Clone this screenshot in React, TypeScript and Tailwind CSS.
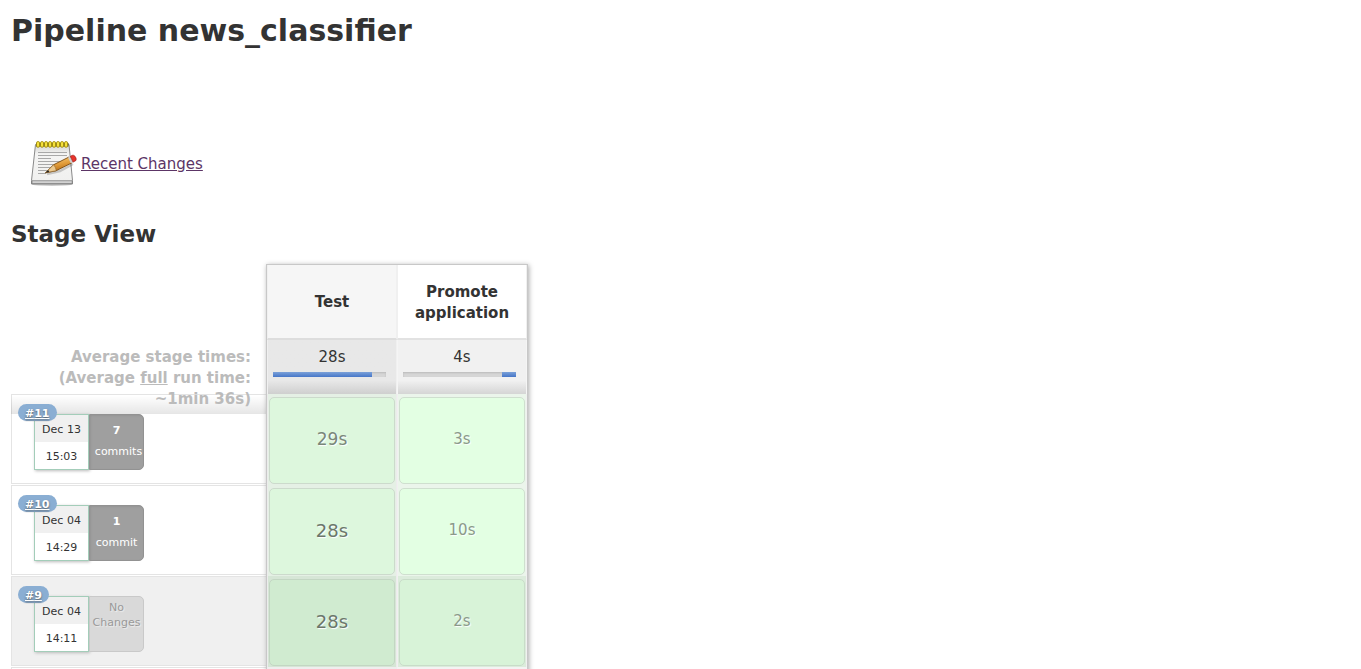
import React from "react";

type Commits = { count?: number; label: string };
type Run = { id: number; date: string; time: string; commits: Commits; test: string; promote: string; big?: boolean; shaded?: boolean };

const runs: Run[] = [
  { id: 11, date: "Dec 13", time: "15:03", commits: { count: 7, label: "commits" }, test: "29s", promote: "3s" },
  { id: 10, date: "Dec 04", time: "14:29", commits: { count: 1, label: "commit" }, test: "28s", promote: "10s", big: true },
  { id: 9, date: "Dec 04", time: "14:11", commits: { label: "No Changes" }, test: "28s", promote: "2s", big: true, shaded: true },
];

function NotepadIcon() {
  return (
    <svg viewBox="0 0 48 48" className="h-12 w-12" aria-hidden="true">
      <defs>
        <linearGradient id="paper" x1="0" y1="0" x2="0" y2="1">
          <stop offset="0" stopColor="#d4d4d2" />
          <stop offset="0.25" stopColor="#f4f4f3" />
          <stop offset="1" stopColor="#f0f0ef" />
        </linearGradient>
        <linearGradient id="wood" x1="0.3" y1="0" x2="0.6" y2="1">
          <stop offset="0" stopColor="#f8cc78" />
          <stop offset="0.5" stopColor="#e09a38" />
          <stop offset="1" stopColor="#a8620f" />
        </linearGradient>
      </defs>
      <ellipse cx="22" cy="44.500" rx="20" ry="1.400" fill="#000" opacity="0.2" />
      <path d="M5.500 4.500h33.500l3.500 36v3.500h-41v-3.500z" fill="url(#paper)" stroke="#8a8a8a" strokeWidth="1" strokeLinejoin="round" />
      <path d="M2 40.700h40.200v2.800H2z" fill="#d2d2d2" stroke="#777" strokeWidth="0.7" />
      <path d="M8 12.500h29M8 15.500h29M8 18.500h13M8 21.500h29M8 24.500h29M8 27.500h25M8 30.500h12M8 33.500h8" stroke="#a8a8a8" strokeWidth="1" />
      <path d="M6 3h32.500v3.500H6z" fill="#555032" />
      {[6, 10, 14, 18, 22, 26, 30, 34].map((x) => (
        <rect key={x} x={x + 0.5} y="1.500" width="3.100" height="5.800" rx="1.500" fill="#f6e23c" stroke="#9a8508" strokeWidth="0.8" />
      ))}
      <path d="M17 34l13-3 13-7" stroke="#000" strokeWidth="2.500" opacity="0.18" fill="none" />
      <path d="M15.500 32.800l8-8L39 17l3 5.800-16 8z" fill="url(#wood)" stroke="#7a4a10" strokeWidth="0.9" strokeLinejoin="round" />
      <path d="M15.500 32.800l8-8c1.500 1.500 2.500 3.500 2.700 5.900z" fill="#edc98e" stroke="#8a642f" strokeWidth="0.6" />
      <path d="M15.500 32.800l2.700-2.700 1.100 2z" fill="#222" />
      <path d="M38 17.500l2.800 5.800 2.200-1.100-2.700-5.800z" fill="#d0d0d0" />
      <path d="M40.300 16.300l2.200-1c2.200-.7 4.700 3.600 3.200 5.400l-2.700 1.400z" fill="#e8332b" stroke="#9e1c16" strokeWidth="0.7" />
    </svg>
  );
}

function StageAverage({ time, before, width }: { time: string; before: string; width: string }) {
  return (
    <div className="flex h-[54px] flex-col px-[5px] pt-[7px]">
      <span className="text-center leading-[21px]">{time}</span>
      <div className="mt-1 flex h-[5px] w-[113px] bg-[#d6d6d6] shadow-[inset_0_1px_2px_#bbb]">
        <span className={before} />
        <span className={`${width} bg-linear-to-b from-[#7ba1d8] to-[#4676c8]`} />
      </div>
    </div>
  );
}

function StageCell({ value, className, text }: { value: string; className: string; text: string }) {
  return (
    <div className={`mx-px mt-[3px] flex h-[87px] items-center justify-center rounded-[5px] border pb-[3px] ${className}`}>
      <span className={`leading-[21px] [text-shadow:1px_1px_1px_#fff] ${text}`}>{value}</span>
    </div>
  );
}

function RunCard({ run }: { run: Run }) {
  const { count, label } = run.commits;
  return (
    <div className="relative flex pt-[19px] pl-[22px] text-[11px]">
      <a href={`#run-${run.id}`} className="absolute top-[9px] left-1.5 z-10 h-[17px] rounded-full bg-[#8aaed3] px-[7px] leading-[19px] font-bold text-white underline [text-shadow:0_1px_2px_#555]">
        #{run.id}
      </a>
      <div className="h-14 w-[55px] border border-[#a3cdb9] bg-white text-center shadow-[1px_1px_3px_#bbb]">
        <div className="h-[27px] bg-[#f0f0f0] leading-[30px]">{run.date}</div>
        <div className="h-[27px] leading-[30px]">{run.time}</div>
      </div>
      {count ? (
        <div className="h-14 w-[55px] rounded-r-[5px] border border-[#929292] bg-[#9f9f9f] pt-[5px] pl-1 text-center leading-[21px] text-white shadow-[inset_1px_1px_2px_#949494]">
          <div className="pr-1 font-bold">{count}</div>
          <div className={label === "commit" ? "pr-1" : ""}>{label}</div>
        </div>
      ) : (
        <div className="h-14 w-[55px] rounded-r-[5px] border border-[#c9c9c9] bg-[#d9d9d9] pt-[3px] text-center leading-[15px] text-[#999] [text-shadow:1px_1px_1px_#eee]">
          {label}
        </div>
      )}
    </div>
  );
}

export default function App() {
  return (
    <main className="h-screen overflow-hidden bg-white px-[11px] pt-2 font-['DejaVu_Sans',sans-serif] text-[15px] text-[#333]">
      <h1 className="text-[30px] leading-[45px] font-bold">Pipeline news_classifier</h1>
      <div className="mt-[87px] ml-[19px] flex h-12 items-center gap-[3px]">
        <NotepadIcon />
        <a href="#changes" className="text-[#5c3566] underline">Recent Changes</a>
      </div>
      <h2 className="mt-[29px] text-[23px] leading-[34px] font-bold">Stage View</h2>
      <div className="relative mt-[13px] w-fit">
        <table className="table-fixed border-separate border-spacing-0">
          <colgroup>
            <col className="w-[256px]" />
            <col className="w-[130px]" />
            <col className="w-[130px]" />
          </colgroup>
          <thead>
            <tr>
              <td />
              <th className="h-[76px] border-x border-t border-b-2 border-x-[#f0f0f0] border-t-[#ccc] border-b-[#ddd] bg-[#f6f6f6] px-0 pt-0.5 pb-0 leading-[21px]">Test</th>
              <th className="h-[76px] border-x border-t border-b-2 border-x-[#f0f0f0] border-t-[#ccc] border-b-[#e2e2e2] px-0 pt-0.5 pb-0 leading-[21px]">Promote<br />application</th>
            </tr>
            <tr>
              <th className="relative p-0">
                <div className="absolute top-0 left-0 z-10 h-[74px] w-[255px] bg-linear-to-b from-transparent from-75% to-black/10 pt-[7px] pr-[15px] pl-8 text-right leading-[21px] text-[#bbb]">
                  Average stage times:<br />(Average <u>full</u> run time: ~1min 36s)
                </div>
              </th>
              <td className="border-x border-[#f0f0f0] bg-linear-to-b from-[#e8e8e8] from-75% to-[#cfcfcf] p-0">
                <StageAverage time="28s" before="w-0" width="w-[99px]" />
              </td>
              <td className="border-x border-[#f5f5f5] bg-linear-to-b from-[#f1f1f1] from-75% to-[#d5d5d5] p-0">
                <StageAverage time="4s" before="w-[99px]" width="w-[14px]" />
              </td>
            </tr>
          </thead>
          <tbody>
            {runs.map((run) => (
              <tr key={run.id}>
                <td className="h-[91px] p-0 align-top">
                  <div className={`h-[90px] border-y border-l border-[#e4e4e4] ${run.shaded ? "bg-[#f0f0f0]" : ""}`}>
                    <RunCard run={run} />
                  </div>
                </td>
                <td className={`border-x border-[#ececec] p-0 align-top ${run.shaded ? "bg-[#d6e6d6]" : "bg-[#e5f0e5]"}`}>
                  <StageCell value={run.test} className={run.shaded ? "border-[#c3d6c3] bg-[#d0ebd0]" : "border-[#ccdacc] bg-[#ddf7dd]"} text={run.big ? "text-[18px] text-[#6b776b]" : "text-[17px] text-[#7a877a]"} />
                </td>
                <td className={`border-x border-[#f0f0f0] p-0 align-top ${run.shaded ? "bg-[#dcecdc]" : "bg-[#ebf5eb]"}`}>
                  <StageCell value={run.promote} className={run.shaded ? "border-[#c9dcc9] bg-[#d8f3d8]" : "border-[#cfdfcf] bg-[#e3ffe3]"} text="text-[15px] text-[#8b9a8b]" />
                </td>
              </tr>
            ))}
            <tr>
              <td className="h-[91px] border-t border-l border-[#e4e4e4]" />
              <td className="bg-[#eee]" />
              <td className="bg-[#f3f3f3]" />
            </tr>
          </tbody>
        </table>
        <div aria-hidden="true" className="pointer-events-none absolute inset-y-0 right-0 left-[255px] -mr-px border border-[#c8c8c8] shadow-[1px_1px_5px_#aaa]" />
      </div>
    </main>
  );
}
